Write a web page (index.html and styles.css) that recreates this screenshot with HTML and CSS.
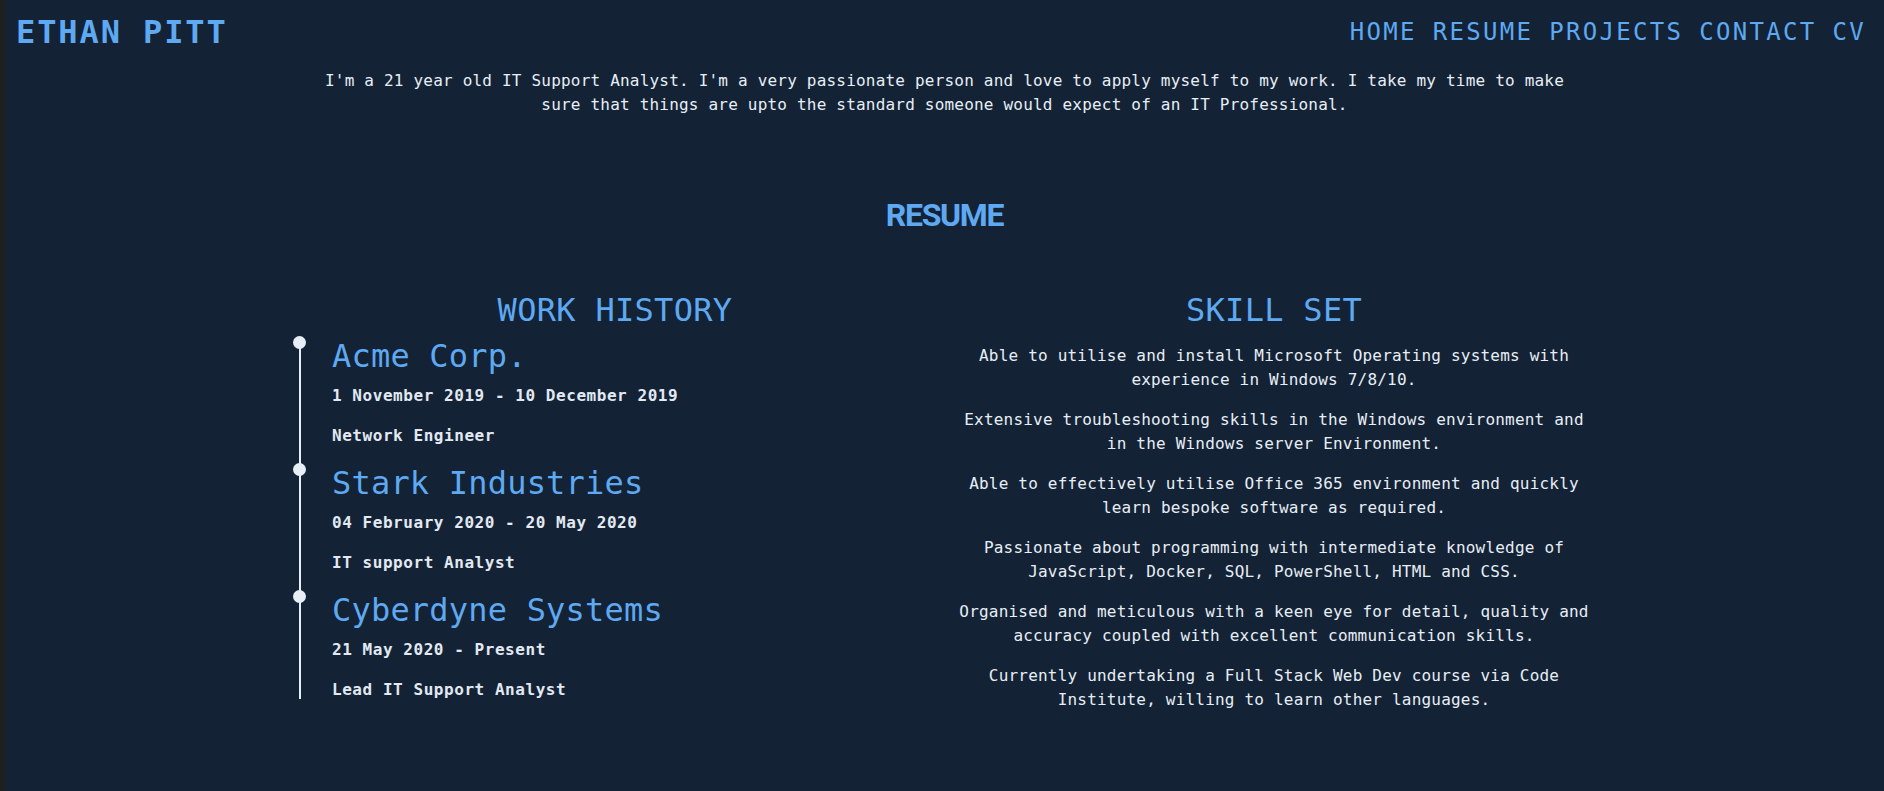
FILE: index.html
```html
<!DOCTYPE html>
<html lang="en">
<head>
<meta charset="utf-8">
<title>Ethan Pitt - Resume</title>
<link rel="stylesheet" href="styles.css">
</head>
<body>
<header class="site-header">
  <a class="brand" href="#">ETHAN PITT</a>
  <nav class="nav">
    <a class="nav-link" href="#">HOME</a>
    <a class="nav-link" href="#">RESUME</a>
    <a class="nav-link" href="#">PROJECTS</a>
    <a class="nav-link" href="#">CONTACT</a>
    <a class="nav-link" href="#">CV</a>
  </nav>
</header>
<main class="page">
  <p class="about">I'm a 21 year old IT Support Analyst. I'm a very passionate person and love to apply myself to my work. I take my time to make sure that things are upto the standard someone would expect of an IT Professional.</p>
  <section class="resume">
    <h1 class="section-title">RESUME</h1>
    <div class="resume-grid">
      <div class="col">
        <h2 class="col-title">WORK HISTORY</h2>
        <ul class="timeline">
          <li class="job">
            <h3 class="job-company">Acme Corp.</h3>
            <p class="job-dates">1 November 2019 - 10 December 2019</p>
            <p class="job-role">Network Engineer</p>
          </li>
          <li class="job">
            <h3 class="job-company">Stark Industries</h3>
            <p class="job-dates">04 February 2020 - 20 May 2020</p>
            <p class="job-role">IT support Analyst</p>
          </li>
          <li class="job">
            <h3 class="job-company">Cyberdyne Systems</h3>
            <p class="job-dates">21 May 2020 - Present</p>
            <p class="job-role">Lead IT Support Analyst</p>
          </li>
        </ul>
      </div>
      <div class="col">
        <h2 class="col-title">SKILL SET</h2>
        <div class="skills">
          <p class="skill">Able to utilise and install Microsoft Operating systems with experience in Windows 7/8/10.</p>
          <p class="skill">Extensive troubleshooting skills in the Windows environment and in the Windows server Environment.</p>
          <p class="skill">Able to effectively utilise Office 365 environment and quickly learn bespoke software as required.</p>
          <p class="skill">Passionate about programming with intermediate knowledge of JavaScript, Docker, SQL, PowerShell, HTML and CSS.</p>
          <p class="skill">Organised and meticulous with a keen eye for detail, quality and accuracy coupled with excellent communication skills.</p>
          <p class="skill">Currently undertaking a Full Stack Web Dev course via Code Institute, willing to learn other languages.</p>
        </div>
      </div>
    </div>
  </section>
</main>
</body>
</html>
```
FILE: styles.css
```css
html {
  background: #132335;
}
body {
  margin: 0;
  box-sizing: border-box;
  min-height: 100vh;
  border-left: 5px solid #1f1f1f;
  background: #132335;
  color: #e8eef6;
  font-family: "DejaVu Sans Mono", "Liberation Mono", monospace;
  font-size: 16px;
  line-height: 24px;
}
a {
  text-decoration: none;
  color: inherit;
}

/* header */
.site-header {
  display: flex;
  justify-content: space-between;
  align-items: center;
  padding: 12px 18px 10px 11px;
}
.brand {
  color: #5ea9f2;
  font-weight: 700;
  font-size: 32px;
  line-height: 40px;
  letter-spacing: 1.9px;
}
.nav {
  display: flex;
  gap: 16px;
}
.nav-link {
  color: #5ea9f2;
  font-size: 24px;
  line-height: 40px;
  letter-spacing: 2.3px;
}

/* intro */
.page {
  display: flex;
  flex-direction: column;
  align-items: center;
}
.about {
  max-width: 1256px;
  margin: 7px 0 0;
  text-align: center;
  letter-spacing: 0.2px;
}

/* resume */
.resume {
  width: 1318px;
  margin-top: 78px;
}
.section-title {
  margin: 0;
  text-align: center;
  color: #5ea9f2;
  font-family: Roboto, "Liberation Sans", sans-serif;
  font-weight: 700;
  font-size: 32px;
  line-height: 40px;
  letter-spacing: -1.3px;
}
.resume-grid {
  display: grid;
  grid-template-columns: 1fr 1fr;
  margin-top: 55px;
}
.col-title {
  margin: 0 0 6px;
  text-align: center;
  color: #5ea9f2;
  font-weight: 400;
  font-size: 32px;
  line-height: 40px;
  letter-spacing: 0.3px;
}

/* timeline */
.timeline {
  position: relative;
  list-style: none;
  margin: 0 0 0 13.5px;
  padding: 0 0 0 33px;
}
.timeline::before {
  content: "";
  position: absolute;
  left: 0;
  top: 2px;
  bottom: 3px;
  width: 2px;
  background: #e8eef6;
}
.job {
  position: relative;
  margin-bottom: 15px;
}
.job:last-child {
  margin-bottom: 0;
}
.job::before {
  content: "";
  position: absolute;
  left: -39.5px;
  top: 0;
  width: 13px;
  height: 13px;
  border-radius: 50%;
  background: #e8eef6;
}
.job-company {
  margin: 0;
  color: #5ea9f2;
  font-weight: 400;
  font-size: 32px;
  line-height: 40px;
  letter-spacing: 0.2px;
}
.job-dates {
  margin: 8px 0 0;
  font-weight: 700;
  letter-spacing: 0.55px;
  color: #e2e9f2;
}
.job-role {
  margin: 16px 0 0;
  font-weight: 700;
  letter-spacing: 0.55px;
  color: #e2e9f2;
}

/* skills */
.skills {
  display: flex;
  flex-direction: column;
  gap: 16px;
  padding: 0 10px;
  margin-top: 14px;
}
.skill {
  margin: 0;
  text-align: center;
  letter-spacing: 0.2px;
}
```
